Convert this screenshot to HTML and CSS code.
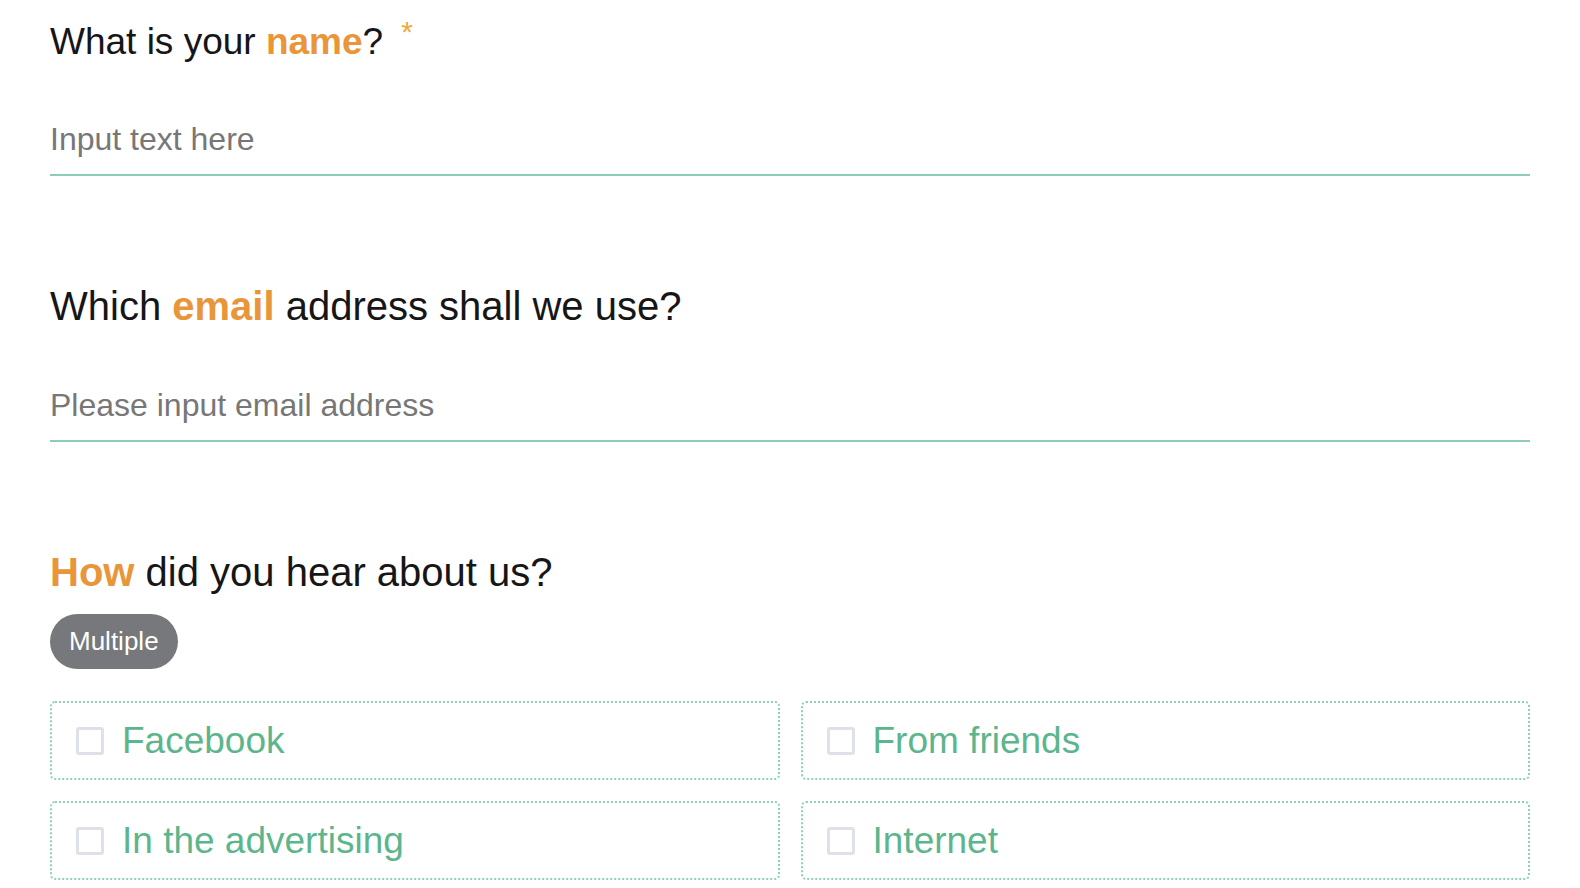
FILE: index.html
```html
<!DOCTYPE html>
<html lang="en">
<head>
<meta charset="utf-8">
<title>Form</title>
<link rel="stylesheet" href="styles.css">
</head>
<body>
<form class="form">
  <div class="field">
    <h2 class="q q-first">What is your <b class="hl">name</b>?<span class="req">*</span></h2>
    <input class="text-input" type="text" placeholder="Input text here">
  </div>
  <div class="field">
    <h2 class="q">Which <b class="hl">email</b> address shall we use?</h2>
    <input class="text-input" type="email" placeholder="Please input email address">
  </div>
  <div class="field field-last">
    <h2 class="q q-tight"><b class="hl">How</b> did you hear about us?</h2>
    <span class="pill">Multiple</span>
    <div class="options">
      <label class="option"><span class="check"></span><span class="opt-text">Facebook</span></label>
      <label class="option"><span class="check"></span><span class="opt-text">From friends</span></label>
      <label class="option"><span class="check"></span><span class="opt-text">In the advertising</span></label>
      <label class="option"><span class="check"></span><span class="opt-text">Internet</span></label>
    </div>
  </div>
</form>
</body>
</html>
```

FILE: styles.css
```css
html, body {
  margin: 0;
  padding: 0;
  background: #ffffff;
}
body {
  font-family: "Liberation Sans", Arial, Helvetica, sans-serif;
  color: #161616;
}
.form {
  padding: 20px 50px 0 50px;
}
.field {
  margin-bottom: 106px;
}
.field-last {
  margin-bottom: 0;
}
.q {
  margin: 0 0 40px 0;
  font-size: 40px;
  line-height: 48px;
  font-weight: normal;
  color: #161616;
}
.q-first {
  font-size: 37px;
  line-height: 44px;
}
.q-tight {
  margin-bottom: 18px;
}
.hl {
  color: #e9963b;
  font-weight: bold;
}
.req {
  display: inline-block;
  vertical-align: top;
  margin-left: 18px;
  font-size: 30px;
  line-height: 24px;
  color: #f3a83c;
}
.text-input {
  display: block;
  box-sizing: border-box;
  width: 100%;
  height: 72px;
  padding: 0;
  margin: 0;
  border: none;
  border-bottom: 2px solid #8ccdb3;
  outline: none;
  background: transparent;
  font-family: "Liberation Sans", Arial, Helvetica, sans-serif;
  font-size: 32px;
  color: #161616;
}
.text-input::placeholder {
  color: #777777;
  opacity: 1;
}
.pill {
  display: inline-block;
  height: 55px;
  line-height: 55px;
  padding: 0 19px;
  border-radius: 28px;
  background: #77787b;
  color: #ffffff;
  font-size: 26px;
}
.options {
  margin-top: 32px;
  display: grid;
  grid-template-columns: 1fr 1fr;
  column-gap: 21px;
  row-gap: 21px;
}
.option {
  box-sizing: border-box;
  height: 79px;
  display: flex;
  align-items: center;
  padding: 0 24px;
  border: 2px dotted #8fd0b8;
  border-radius: 5px;
  cursor: pointer;
}
.check {
  box-sizing: border-box;
  width: 28px;
  height: 28px;
  border: 3px solid #dfe1ea;
  border-radius: 3px;
  flex: none;
  background: #fff;
}
.opt-text {
  margin-left: 18px;
  font-size: 37px;
  color: #5db58d;
}
```
